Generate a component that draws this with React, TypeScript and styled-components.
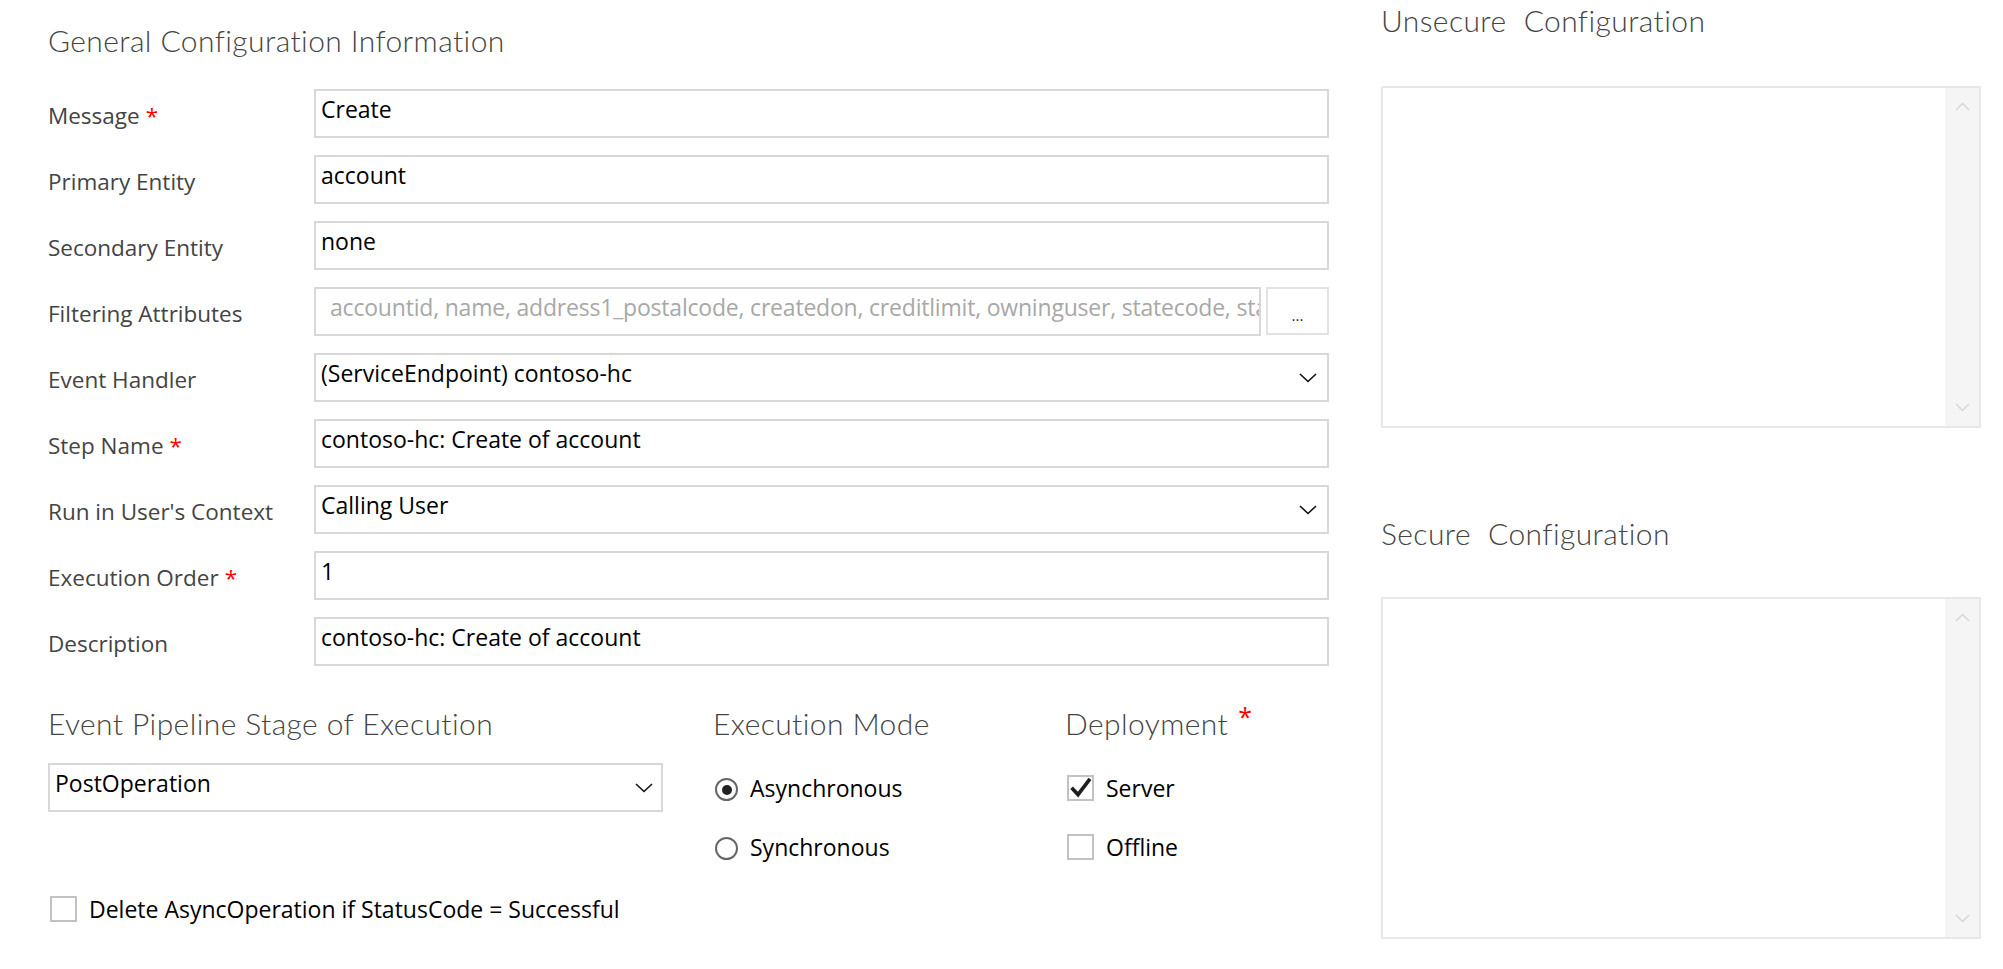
import styled, { createGlobalStyle } from "styled-components";

const GlobalStyle = createGlobalStyle`
  html, body {
    margin: 0;
    padding: 0;
    background: #fff;
  }
  body {
    font-family: "Open Sans", "Noto Sans", sans-serif;
    color: #000;
  }
`;

const Page = styled.div`
  display: flex;
  gap: 52px;
  width: 2003px;
  padding-left: 48px;
  box-sizing: border-box;
`;

const MainColumn = styled.div`
  width: 1281px;
  padding-top: 20px;
`;

const SideColumn = styled.div`
  width: 600px;
`;

const SectionTitle = styled.h2<{ $top?: number }>`
  margin: ${(p) => p.$top ?? 0}px 0 0;
  font-family: "Lato", "Open Sans", sans-serif;
  font-size: 30px;
  font-weight: 300;
  letter-spacing: 0.4px;
  line-height: 40px;
  color: #444;
  white-space: pre;
`;

const FieldGrid = styled.div`
  display: grid;
  grid-template-columns: 266px minmax(0, 1fr);
  grid-auto-rows: 49px;
  row-gap: 17px;
  margin-top: 29px;
`;

const Label = styled.div`
  font-size: 22.5px;
  line-height: 49px;
  padding-top: 2px;
  color: #444;
  white-space: nowrap;
`;

const Required = styled.span`
  color: #ff0000;
  margin-left: 6px;
`;

const TitleMark = styled(Required)`
  font-family: "Open Sans", sans-serif;
  font-size: 25px;
  font-weight: 400;
  line-height: 27px;
  letter-spacing: 0;
  margin-left: 10px;
  vertical-align: top;
`;

const Field = styled.div<{ $placeholder?: boolean }>`
  display: flex;
  justify-content: space-between;
  box-sizing: border-box;
  height: 49px;
  min-width: 0;
  border: 2px solid #d8d8d8;
  padding: ${(p) => (p.$placeholder ? "3px 0 0 14px" : "3px 10px 0 5px")};
  font-size: 23px;
  line-height: 31px;
  letter-spacing: ${(p) => (p.$placeholder ? "-0.2px" : "normal")};
  color: ${(p) => (p.$placeholder ? "#a8a8a8" : "#000")};
  white-space: nowrap;
  overflow: hidden;
  flex: 1;
`;

const FieldPair = styled.div`
  display: flex;
  gap: 5px;
  min-width: 0;
`;

const LookupButton = styled.div`
  display: flex;
  flex: none;
  align-items: flex-end;
  justify-content: center;
  box-sizing: border-box;
  width: 63px;
  height: 48px;
  padding-bottom: 10px;
  border: 2px solid #e2e2e2;
  font-size: 15px;
  line-height: 15px;
  color: #222;
`;

const Chevron = styled.svg`
  align-self: center;
  flex: none;
  margin-top: -2px;
`;

const StageGrid = styled.div`
  display: grid;
  grid-template-columns: 665px 352px 1fr;
  row-gap: 20px;
  margin-top: 37px;
`;

const StageSelect = styled(Field)`
  width: 615px;
  flex: none;
  padding-right: 8px;
`;

const OptionGroup = styled.div`
  display: flex;
  flex-direction: column;
  gap: 10px;
`;

const Option = styled.div`
  display: flex;
  align-items: center;
  gap: 12px;
  height: 49px;
  padding-left: 2px;
  font-size: 23px;
  color: #000;
  white-space: nowrap;
`;

const Radio = styled.span<{ $on?: boolean }>`
  display: flex;
  align-items: center;
  justify-content: center;
  box-sizing: border-box;
  width: 23px;
  height: 23px;
  margin-top: 4px;
  border: 2px solid #666;
  border-radius: 50%;

  &::after {
    content: "";
    width: 10px;
    height: 10px;
    border-radius: 50%;
    background: ${(p) => (p.$on ? "#222" : "transparent")};
  }
`;

const CheckBox = styled.span`
  display: flex;
  box-sizing: border-box;
  width: 27px;
  height: 26px;
  border: 2px solid #c2c2c2;
`;

const DeleteRow = styled(Option)`
  margin-top: 13px;
`;

const ConfigBox = styled.div<{ $top: number }>`
  display: flex;
  box-sizing: border-box;
  height: 342px;
  margin-top: ${(p) => p.$top}px;
  border: 2px solid #e8e8e8;
`;

const ConfigText = styled.div`
  flex: 1;
`;

const ScrollTrack = styled.div`
  display: flex;
  flex-direction: column;
  justify-content: space-between;
  align-items: center;
  width: 34px;
  padding: 14px 0 14px;
  background: #f5f5f5;
`;

function DownChevron() {
  return (
    <Chevron width="18" height="10" viewBox="0 0 18 10">
      <polyline points="1,1 9,8.5 17,1" fill="none" stroke="#111" strokeWidth="1.6" />
    </Chevron>
  );
}

function ScrollArrow({ up }: { up?: boolean }) {
  return (
    <svg width="15" height="9" viewBox="0 0 15 9">
      <polyline
        points={up ? "1,8 7.5,1.5 14,8" : "1,1 7.5,7.5 14,1"}
        fill="none"
        stroke="#d6d6d6"
        strokeWidth="1.4"
      />
    </svg>
  );
}

function Check() {
  return (
    <svg width="23" height="22" viewBox="0 0 23 22">
      <polyline points="2.6,10.8 9,17.6 21,1.8" fill="none" stroke="#1e1e1e" strokeWidth="3.6" />
    </svg>
  );
}

const fields: { label: string; value: string; required?: boolean; select?: boolean }[] = [
  { label: "Message", value: "Create", required: true },
  { label: "Primary Entity", value: "account" },
  { label: "Secondary Entity", value: "none" },
  { label: "Filtering Attributes", value: "" },
  { label: "Event Handler", value: "(ServiceEndpoint) contoso-hc", select: true },
  { label: "Step Name", value: "contoso-hc: Create of account", required: true },
  { label: "Run in User's Context", value: "Calling User", select: true },
  { label: "Execution Order", value: "1", required: true },
  { label: "Description", value: "contoso-hc: Create of account" },
];

export default function App() {
  return (
    <>
      <GlobalStyle />
      <Page>
        <MainColumn>
          <SectionTitle>General Configuration Information</SectionTitle>
          <FieldGrid>
            {fields.map((f) => [
              <Label key={f.label + "-l"}>
                {f.label}
                {f.required && <Required>*</Required>}
              </Label>,
              f.label === "Filtering Attributes" ? (
                <FieldPair key={f.label}>
                  <Field $placeholder>
                    accountid, name, address1_postalcode, createdon, creditlimit, owninguser, statecode, sta
                  </Field>
                  <LookupButton>...</LookupButton>
                </FieldPair>
              ) : (
                <Field key={f.label}>
                  <span>{f.value}</span>
                  {f.select && <DownChevron />}
                </Field>
              ),
            ])}
          </FieldGrid>

          <StageGrid>
            <SectionTitle>Event Pipeline Stage of Execution</SectionTitle>
            <SectionTitle>Execution Mode</SectionTitle>
            <SectionTitle>
              Deployment
              <TitleMark>*</TitleMark>
            </SectionTitle>

            <StageSelect>
              <span>PostOperation</span>
              <DownChevron />
            </StageSelect>
            <OptionGroup>
              <Option>
                <Radio $on />
                Asynchronous
              </Option>
              <Option>
                <Radio />
                Synchronous
              </Option>
            </OptionGroup>
            <OptionGroup>
              <Option>
                <CheckBox>
                  <Check />
                </CheckBox>
                Server
              </Option>
              <Option>
                <CheckBox />
                Offline
              </Option>
            </OptionGroup>
          </StageGrid>

          <DeleteRow>
            <CheckBox />
            Delete AsyncOperation if StatusCode = Successful
          </DeleteRow>
        </MainColumn>

        <SideColumn>
          <SectionTitle>{"Unsecure  Configuration"}</SectionTitle>
          <ConfigBox $top={46}>
            <ConfigText />
            <ScrollTrack>
              <ScrollArrow up />
              <ScrollArrow />
            </ScrollTrack>
          </ConfigBox>
          <SectionTitle $top={85}>{"Secure  Configuration"}</SectionTitle>
          <ConfigBox $top={44}>
            <ConfigText />
            <ScrollTrack>
              <ScrollArrow up />
              <ScrollArrow />
            </ScrollTrack>
          </ConfigBox>
        </SideColumn>
      </Page>
    </>
  );
}
